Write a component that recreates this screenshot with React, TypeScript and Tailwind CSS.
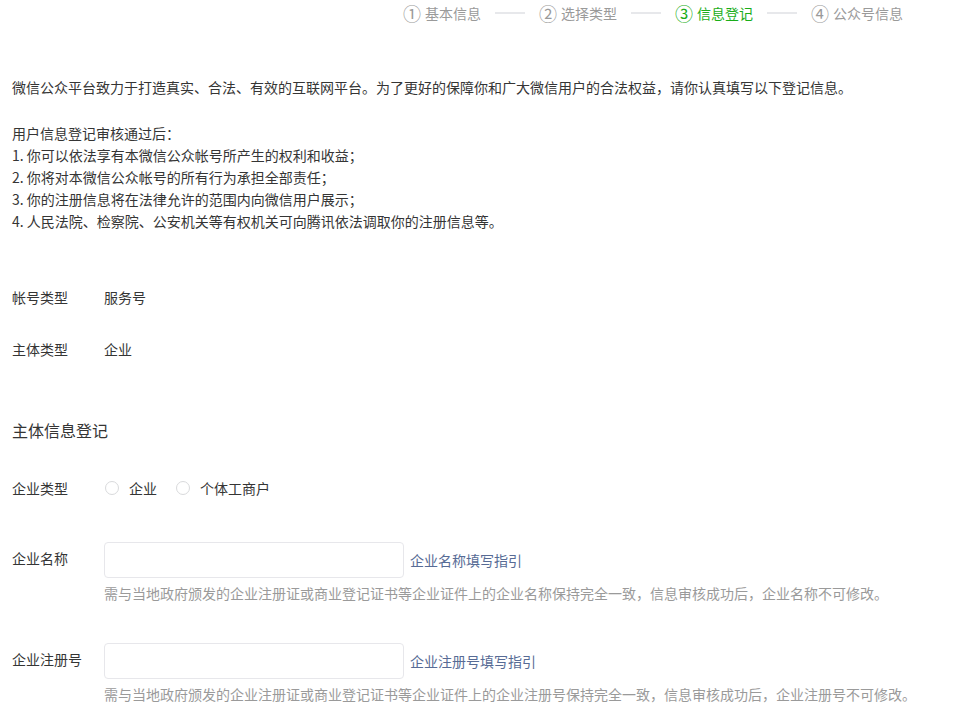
import clsx from 'clsx'

const steps = [
  { num: '①', label: '基本信息' },
  { num: '②', label: '选择类型' },
  { num: '③', label: '信息登记' },
  { num: '④', label: '公众号信息' },
]

const rules = [
  '1. 你可以依法享有本微信公众帐号所产生的权利和收益；',
  '2. 你将对本微信公众帐号的所有行为承担全部责任；',
  '3. 你的注册信息将在法律允许的范围内向微信用户展示；',
  '4. 人民法院、检察院、公安机关等有权机关可向腾讯依法调取你的注册信息等。',
]

function Radio({ label }: { label: string }) {
  return (
    <label className="flex items-center gap-[10px]">
      <span className="h-[14px] w-[14px] rounded-full border border-[#d9dadc] bg-white" />
      <span>{label}</span>
    </label>
  )
}

function Field({ label, guide, hint }: { label: string; guide: string; hint: string }) {
  return (
    <div>
      <div className="flex items-center">
        <div className="w-[92px] pb-[4px]">{label}</div>
        <input
          type="text"
          className="h-[36px] w-[300px] rounded-[4px] border border-[#e7e7eb] bg-white px-2 outline-none"
        />
        <a className="ml-[6px] text-[#576b95]" href="#">
          {guide}
        </a>
      </div>
      <p className="ml-[92px] mt-[4px] text-[#9a9a9a]">{hint}</p>
    </div>
  )
}

export default function App() {
  return (
    <div
      className="min-h-screen bg-white pl-[12px] text-[14px] leading-[22px] text-[#353535]"
      style={{ fontFamily: '"Noto Sans CJK SC", "Noto Sans", sans-serif' }}
    >
      <div className="flex h-[26px] items-center justify-end pr-[66px]">
        {steps.map((step, i) => (
          <div key={step.label} className="flex items-center">
            {i > 0 ? <span className="mx-[14px] h-[2px] w-[30px] bg-[#e7e8eb]" /> : null}
            <span
              className={clsx(
                'flex items-center gap-[4px]',
                i === 2 ? 'text-[#1aad19]' : 'text-[#9a9a9a]'
              )}
            >
              <span className="text-[18px] leading-[26px]">{step.num}</span>
              <span>{step.label}</span>
            </span>
          </div>
        ))}
      </div>

      <p className="mt-[50px]">
        微信公众平台致力于打造真实、合法、有效的互联网平台。为了更好的保障你和广大微信用户的合法权益，请你认真填写以下登记信息。
      </p>

      <div className="mt-[24px]">
        <p>用户信息登记审核通过后：</p>
        {rules.map((r) => (
          <p key={r}>{r}</p>
        ))}
      </div>

      <div className="mt-[54px] flex">
        <div className="w-[92px]">帐号类型</div>
        <div>服务号</div>
      </div>
      <div className="mt-[30px] flex">
        <div className="w-[92px]">主体类型</div>
        <div>企业</div>
      </div>

      <h2 className="mt-[58px] text-[16px] leading-[24px]">主体信息登记</h2>

      <div className="mt-[35px] flex items-center">
        <div className="w-[93px]">企业类型</div>
        <div className="flex items-center gap-[19px]">
          <Radio label="企业" />
          <Radio label="个体工商户" />
        </div>
      </div>

      <div className="mt-[43px]">
        <Field
          label="企业名称"
          guide="企业名称填写指引"
          hint="需与当地政府颁发的企业注册证或商业登记证书等企业证件上的企业名称保持完全一致，信息审核成功后，企业名称不可修改。"
        />
      </div>

      <div className="mt-[39px]">
        <Field
          label="企业注册号"
          guide="企业注册号填写指引"
          hint="需与当地政府颁发的企业注册证或商业登记证书等企业证件上的企业注册号保持完全一致，信息审核成功后，企业注册号不可修改。"
        />
      </div>
    </div>
  )
}
